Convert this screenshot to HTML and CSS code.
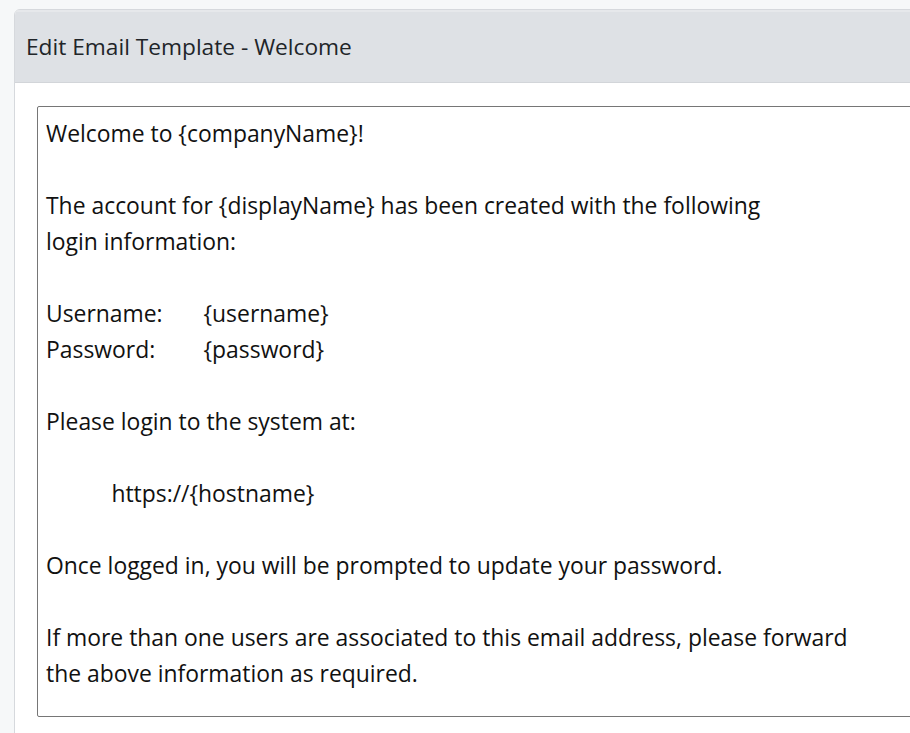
FILE: index.html
```html
<!DOCTYPE html>
<html lang="en">
<head>
<meta charset="utf-8">
<title>Edit Email Template - Welcome</title>
<link rel="stylesheet" href="styles.css">
</head>
<body>
<main class="page">
  <section class="card">
    <header class="card-header">Edit Email Template - Welcome</header>
    <div class="card-body">
      <textarea class="template-editor" spellcheck="false">Welcome to {companyName}!

The account for {displayName} has been created with the following
login information:

Username:	{username}
Password:	{password}

Please login to the system at:

           https://{hostname}

Once logged in, you will be prompted to update your password.

If more than one users are associated to this email address, please forward
the above information as required.</textarea>
    </div>
  </section>
</main>
</body>
</html>
```
FILE: styles.css
```css
html, body {
  margin: 0;
  padding: 0;
  overflow: hidden;
  background: #f6f8f9;
}

.page {
  padding: 9px 0 0 14px;
  width: 1100px;
  font-family: "Open Sans", "Noto Sans", sans-serif;
  color: #212529;
}

.card {
  background: #fff;
  border: 1px solid #d6d9dd;
  border-radius: 6px;
  overflow: hidden;
}

.card-header {
  background: #dee1e5;
  border-bottom: 1px solid #d2d5d9;
  box-shadow: inset 0 2px 0 #e6e8eb;
  height: 73px;
  box-sizing: border-box;
  padding: 1px 11px 0 11px;
  display: flex;
  align-items: center;
  font-size: 22.7px;
  line-height: 36px;
}

.card-body {
  padding: 23px 22px 40px 22px;
}

.template-editor {
  display: block;
  box-sizing: border-box;
  width: 1000px;
  height: 611px;
  margin: 0;
  padding: 9px 8px;
  border: 1px solid #767676;
  border-radius: 2px 0 0 2px;
  background: #fff;
  color: #111;
  font-family: "Open Sans", "Noto Sans", sans-serif;
  font-size: 22.9px;
  line-height: 36px;
  tab-size: 52.5px;
  white-space: pre;
  overflow: hidden;
  resize: none;
  outline: none;
}
```
